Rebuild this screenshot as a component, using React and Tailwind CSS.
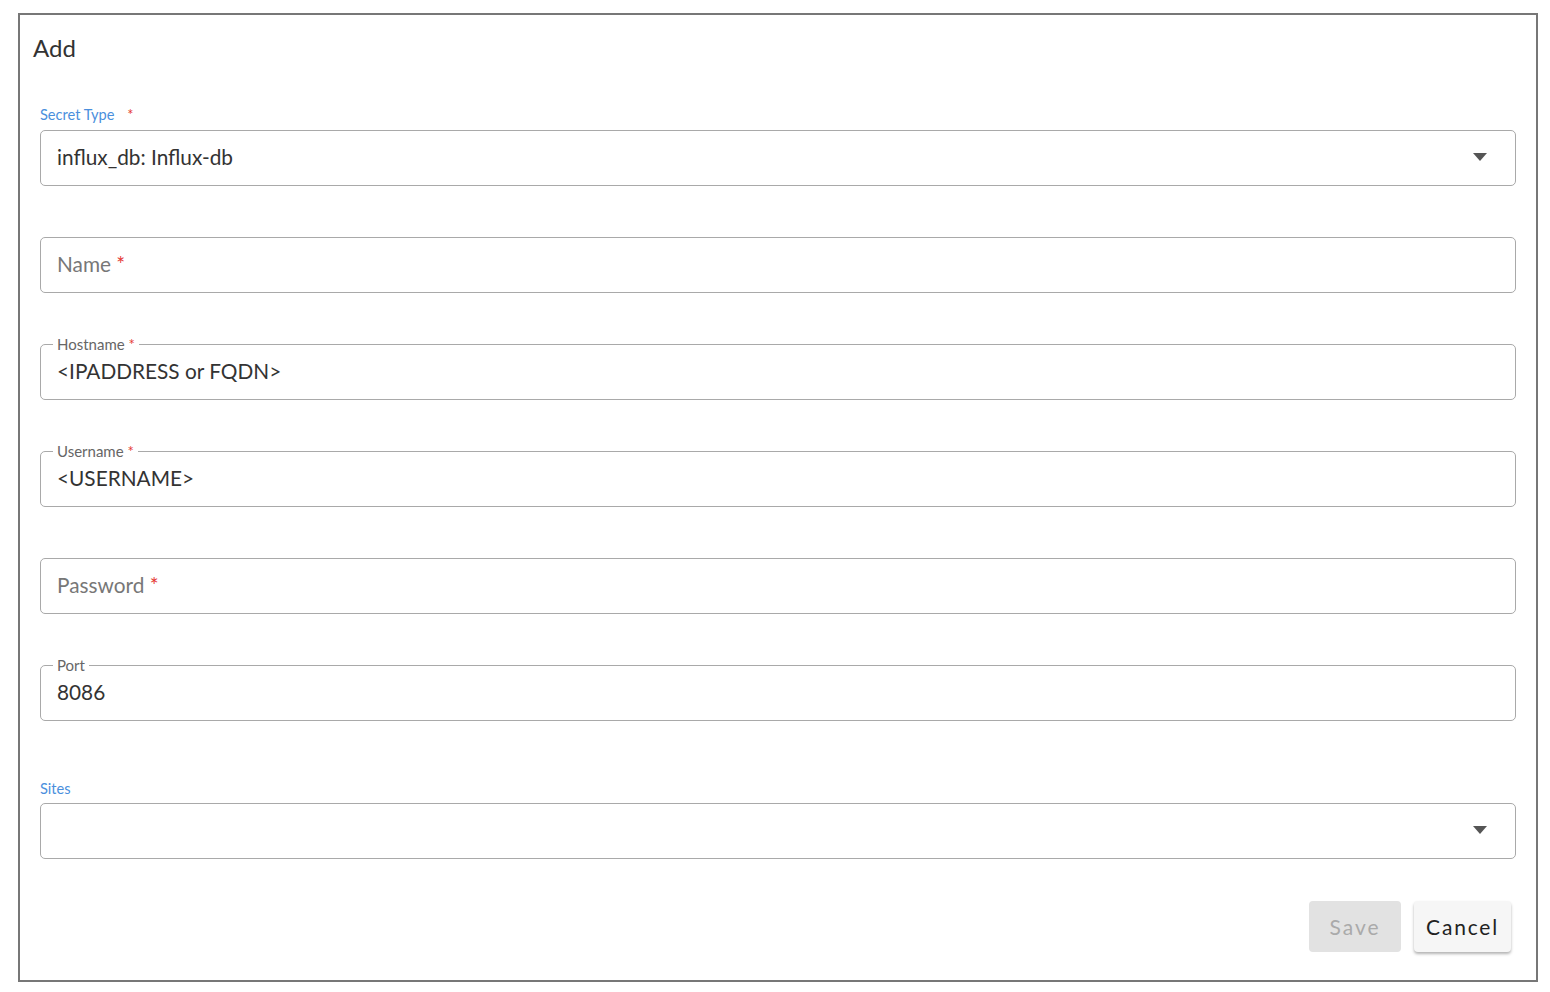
const font = { fontFamily: "Lato, 'Noto Sans', sans-serif" };

const Star = () => <span className="text-[#e53935]">*</span>;

const Caret = () => (
  <svg className="w-[16px] h-[8px] text-[#555]" viewBox="0 0 16 8" fill="currentColor">
    <path d="M1 0h14L8 8z" />
  </svg>
);

const FieldBox = ({ children, className = "" }) => (
  <div
    className={`relative h-[56px] rounded-[5px] border border-[#a9a9a9] flex items-center pl-[16px] pr-[27px] pb-[2px] ${className}`}
  >
    {children}
  </div>
);

const Outlined = ({ label, required, value, className }) => (
  <FieldBox className={className}>
    <span className="absolute left-[12px] -top-[10px] bg-white px-[4px] text-[15px] leading-[18px] text-[#666]">
      {label}
      {required && (
        <>
          {" "}
          <Star />
        </>
      )}
    </span>
    <span className="text-[20.8px] text-[#333]">{value}</span>
  </FieldBox>
);

const Placeholder = ({ label, className }) => (
  <FieldBox className={className}>
    <span className="text-[20.8px] text-[#777]">
      {label} <Star />
    </span>
  </FieldBox>
);

export default function App() {
  return (
    <div className="bg-white min-h-[992px] pt-[13px] pl-[18px]" style={font}>
      <div className="w-[1520px] h-[969px] border-2 border-[#777] flex flex-col">
        <div className="pt-[18px] pl-[13px] text-[24px] leading-[30px] text-[#333]">Add</div>
        <div className="px-[20px] flex flex-col">
          <div className="mt-[42px] text-[14.6px] leading-[20px] text-[#4a8fdd]">
            Secret Type <span className="ml-[9px] text-[#e53935]">*</span>
          </div>
          <FieldBox className="mt-[5px] justify-between">
            <span className="text-[20.8px] text-[#333]">influx_db: Influx-db</span>
            <Caret />
          </FieldBox>
          <Placeholder label="Name" className="mt-[51px]" />
          <Outlined label="Hostname" required value="<IPADDRESS or FQDN>" className="mt-[51px]" />
          <Outlined label="Username" required value="<USERNAME>" className="mt-[51px]" />
          <Placeholder label="Password" className="mt-[51px]" />
          <Outlined label="Port" value="8086" className="mt-[51px]" />
          <div className="mt-[58px] text-[14.6px] leading-[20px] text-[#4a8fdd]">Sites</div>
          <FieldBox className="mt-[4px] justify-end">
            <Caret />
          </FieldBox>
        </div>
        <div className="mt-[42px] pr-[25px] flex justify-end gap-[13px]">
          <button className="w-[92px] h-[51px] rounded-[4px] bg-[#e2e2e2] text-[21px] tracking-[2px] text-[#aaa]">
            Save
          </button>
          <button className="w-[97px] h-[51px] rounded-[4px] bg-[#f6f6f6] text-[21px] tracking-[1.8px] text-[#222] shadow-[0_2px_3px_rgba(0,0,0,0.3)]">
            Cancel
          </button>
        </div>
      </div>
    </div>
  );
}
